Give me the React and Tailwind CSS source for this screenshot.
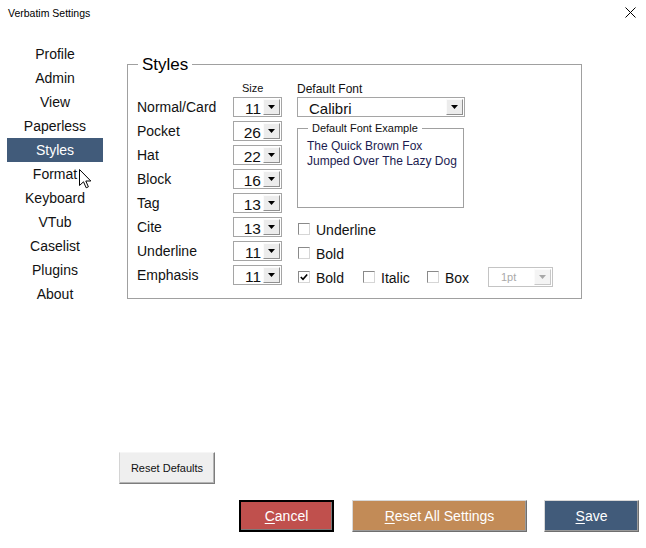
import React from "react";

const sidebarItems = [
  "Profile",
  "Admin",
  "View",
  "Paperless",
  "Styles",
  "Format",
  "Keyboard",
  "VTub",
  "Caselist",
  "Plugins",
  "About",
];

const styleRows = [
  { label: "Normal/Card", size: "11" },
  { label: "Pocket", size: "26" },
  { label: "Hat", size: "22" },
  { label: "Block", size: "16" },
  { label: "Tag", size: "13" },
  { label: "Cite", size: "13" },
  { label: "Underline", size: "11" },
  { label: "Emphasis", size: "11" },
];

const Arrow = ({ disabled }) => (
  <svg width="7" height="4" viewBox="0 0 7 4">
    <polygon points="0,0 7,0 3.5,4" fill={disabled ? "#a8a8a8" : "#000"} />
  </svg>
);

const DropButton = ({ disabled }) => (
  <div
    className={`w-[17px] h-full flex items-center justify-center border border-t-[#fbfbfb] border-l-[#fbfbfb] ${
      disabled
        ? "bg-[#f4f4f4] border-r-[#c8c8c8] border-b-[#c8c8c8]"
        : "bg-[#ececec] border-r-[#8f8f8f] border-b-[#8f8f8f]"
    }`}
  >
    <Arrow disabled={disabled} />
  </div>
);

const SizeBox = ({ value }) => (
  <div className="w-[49px] h-[20px] border border-[#a5a5a5] bg-white flex p-px">
    <span className="flex-1 text-right pr-[2px] text-[15.5px] leading-[20px] text-[#111]">
      {value}
    </span>
    <DropButton />
  </div>
);

const Checkbox = ({ checked }) => (
  <div className="w-[12px] h-[12px] bg-white border border-t-[#8a8a8a] border-l-[#8a8a8a] border-r-[#d6d6d6] border-b-[#d6d6d6] flex items-center justify-center">
    {checked && (
      <svg width="8" height="8" viewBox="0 0 8 8">
        <path d="M0.8 4 L3 6.3 L7.2 1.4" fill="none" stroke="#000" strokeWidth="1.6" />
      </svg>
    )}
  </div>
);

const CheckItem = ({ label, checked, width }) => (
  <div className={`flex items-center gap-[6px] ${width}`}>
    <Checkbox checked={checked} />
    <span className="text-[14px] text-[#111] mt-[2px]">{label}</span>
  </div>
);

const ColorButton = ({ first, rest, width, color, focused }) => (
  <button
    className={`${width} h-[32px] ${color} text-white text-[14px] flex items-center justify-center ${
      focused
        ? "border-2 border-black shadow-[inset_-1px_-1px_0_#7a7a7a]"
        : "border border-t-[#d8d8d8] border-l-[#d8d8d8] border-r-[#6f6f6f] border-b-[#6f6f6f] shadow-[inset_-1px_-1px_0_#9a9a9a]"
    }`}
  >
    <span>
      <span className="underline underline-offset-2">{first}</span>
      {rest}
    </span>
  </button>
);

export default function App() {
  return (
    <div className="w-[646px] h-[548px] bg-white relative font-['Liberation_Sans',Arial,sans-serif] text-[#111]">
      <div className="h-[27px] flex items-center justify-between pl-[8px] pr-[10px]">
        <span className="text-[10.5px] text-black">Verbatim Settings</span>
        <svg width="11" height="11" viewBox="0 0 11 11" className="mb-[2px]">
          <path d="M0.5 0.5 L10.5 10.5 M10.5 0.5 L0.5 10.5" stroke="#000" strokeWidth="1" />
        </svg>
      </div>

      <div className="flex">
        <div className="w-[103px] pl-[7px] pt-[15px]">
          {sidebarItems.map((item) => (
            <div
              key={item}
              className={`h-[24px] flex items-center justify-center text-[14px] ${
                item === "Styles" ? "bg-[#415b7a] text-white" : "text-[#111]"
              }`}
            >
              {item}
            </div>
          ))}
        </div>

        <div className="flex flex-col pl-[16px] pt-[37px]">
          <div className="ml-[8px] w-[455px] h-[235px] border border-[#a0a0a0] relative pl-[9px] pt-[15px]">
            <span className="absolute -top-[11px] left-[10px] px-[4px] bg-white text-[17px] leading-[22px] text-black">
              Styles
            </span>
            <div className="flex">
              <div className="flex flex-col">
                <div className="h-[17px] flex items-center">
                  <span className="w-[96px]" />
                  <span className="pl-[9px] text-[11px]">Size</span>
                </div>
                {styleRows.map((row) => (
                  <div key={row.label} className="h-[24px] flex">
                    <div className="h-[20px] flex items-center">
                      <span className="w-[96px] text-[14px]">{row.label}</span>
                      <SizeBox value={row.size} />
                    </div>
                  </div>
                ))}
              </div>

              <div className="ml-[15px] flex flex-col">
                <div className="h-[17px] flex items-center text-[12px]">Default Font</div>
                <div className="w-[168px] h-[20px] border border-[#a5a5a5] bg-white flex p-px">
                  <span className="flex-1 pl-[10px] text-[15px] leading-[20px]">Calibri</span>
                  <DropButton />
                </div>
                <div className="mt-[11px] w-[167px] h-[80px] border border-[#a0a0a0] relative pl-[9px] pt-[10px]">
                  <span className="absolute -top-[8px] left-[10px] px-[4px] bg-white text-[11px] leading-[14px]">
                    Default Font Example
                  </span>
                  <div className="text-[12px] leading-[15px] text-[#1c1c50]">
                    <div>The Quick Brown Fox</div>
                    <div>Jumped Over The Lazy Dog</div>
                  </div>
                </div>
                <div className="mt-[9px] ml-px flex flex-col">
                  <div className="h-[24px] flex items-center">
                    <CheckItem label="Underline" />
                  </div>
                  <div className="h-[24px] flex items-center">
                    <CheckItem label="Bold" />
                  </div>
                  <div className="h-[24px] flex items-center">
                    <CheckItem label="Bold" checked width="w-[65px]" />
                    <CheckItem label="Italic" width="w-[64px]" />
                    <CheckItem label="Box" width="w-[61px]" />
                    <div className="w-[65px] h-[20px] border border-[#c4c4c4] bg-white flex p-px">
                      <span className="flex-1 pl-[11px] text-[11px] leading-[17px] text-[#a9a9a9]">1pt</span>
                      <DropButton disabled />
                    </div>
                  </div>
                </div>
              </div>
            </div>
          </div>

          <button className="mt-[153px] w-[96px] h-[32px] bg-[#efefef] text-[11px] text-[#111] border border-t-[#f6f6f6] border-l-[#d4d4d4] border-r-[#7d7d7d] border-b-[#7d7d7d] shadow-[inset_-1px_-1px_0_#b4b4b4]">
            Reset Defaults
          </button>
        </div>
      </div>

      <div className="mt-[16px] flex justify-end pr-[7px]">
        <ColorButton first="C" rest="ancel" width="w-[95px]" color="bg-[#c0504d]" focused />
        <div className="w-[18px]" />
        <ColorButton first="R" rest="eset All Settings" width="w-[175px]" color="bg-[#c28b57]" />
        <div className="w-[17px]" />
        <ColorButton first="S" rest="ave" width="w-[95px]" color="bg-[#415b7a]" />
      </div>

      <svg
        className="absolute left-[79px] top-[169px]"
        width="13"
        height="20"
        viewBox="0 0 13 20"
      >
        <path
          d="M0.5 0.5 L0.5 16.5 L4.5 12.8 L7.2 18.8 L9.4 17.8 L6.8 12 L11.8 12 Z"
          fill="#fff"
          stroke="#000"
          strokeWidth="1"
          strokeLinejoin="miter"
        />
      </svg>
    </div>
  );
}
